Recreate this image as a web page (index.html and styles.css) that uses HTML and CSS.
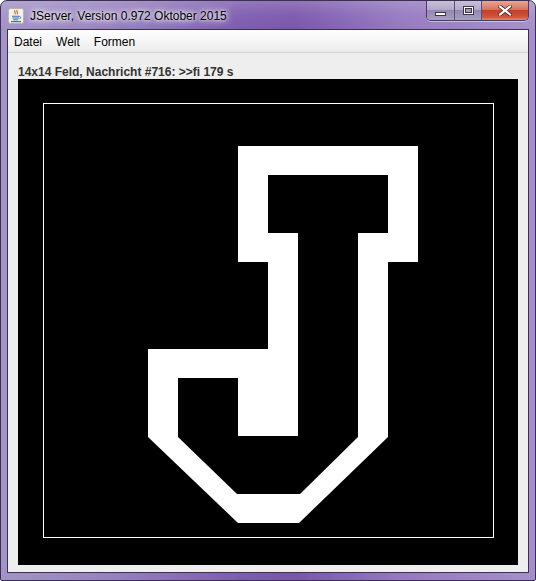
FILE: index.html
```html
<!DOCTYPE html>
<html>
<head>
<meta charset="utf-8">
<title>JServer</title>
<link rel="stylesheet" href="styles.css">
</head>
<body>
<div class="window">
  <div class="titlebar">
    <svg class="appicon" width="16" height="16" viewBox="0 0 16 16">
      <rect x="0.5" y="0.5" width="15" height="15" rx="2" fill="#f4f1ea" stroke="#b9b2a6"/>
      <path d="M7 2.5c-1.5 1.2 1.2 2.2 0 3.8M9 2c-1 1.5 1.4 2 .2 4.2" fill="none" stroke="#e0561f" stroke-width="1.1"/>
      <path d="M4 8.2h7.5M4.5 10h6.5M5.2 11.8h5" stroke="#3b6fb6" stroke-width="1.1"/>
      <path d="M11.5 8.5c1.6 0 1.6 2 0 2.2" fill="none" stroke="#3b6fb6" stroke-width="0.9"/>
      <path d="M3 13.6h10" stroke="#3b6fb6" stroke-width="1.1"/>
    </svg>
    <span class="title">JServer, Version 0.972 Oktober 2015</span>
    <div class="buttons">
      <div class="btn btn-min"><span class="glyph-min"></span></div>
      <div class="btn btn-max"><span class="glyph-max"></span></div>
      <div class="btn btn-close">
        <svg width="14" height="11" viewBox="0 0 14 11">
          <path d="M2 1.5l10 8M12 1.5l-10 8" stroke="#5a1a10" stroke-width="3.6" stroke-linecap="square"/>
          <path d="M2 1.5l10 8M12 1.5l-10 8" stroke="#ffffff" stroke-width="2.2" stroke-linecap="square"/>
        </svg>
      </div>
    </div>
  </div>
  <div class="client">
    <div class="menubar">
      <span class="menu-item">Datei</span>
      <span class="menu-item">Welt</span>
      <span class="menu-item">Formen</span>
    </div>
    <div class="status">14x14 Feld, Nachricht #716: &gt;&gt;fi 179 s</div>
    <svg class="field" width="500" height="486" viewBox="18 79 500 486">
      <rect x="18" y="79" width="500" height="486" fill="#000"/>
      <rect x="43.5" y="103.5" width="450" height="434" fill="none" stroke="#fff" stroke-width="1"/>
      <path fill="#fff" fill-rule="evenodd" d="
        M238 146 H418 V262 H388 V437 L299 523 H238 L148 437 V349 H268 V262 H238 Z
        M268 175 H388 V233 H358 V437 L300 494 H237 L178 437 V378 H238 V436 H298 V233 H268 Z"/>
    </svg>
  </div>
</div>
</body>
</html>
```

FILE: styles.css
```css
* { box-sizing: border-box; }

html, body {
  margin: 0;
  padding: 0;
  background: #ffffff;
}

.window {
  width: 536px;
  height: 581px;
  display: flex;
  flex-direction: column;
  border: 1px solid #3a3050;
  border-radius: 7px 7px 2px 2px;
  background:
    linear-gradient(180deg, rgba(255,255,255,0.18) 0px, rgba(255,255,255,0.05) 14px, rgba(0,0,0,0) 29px),
    linear-gradient(90deg, #a393c6 0%, #9782c0 20%, #7d5cae 45%, #7a56ab 55%, #9579c0 75%, #a58fcb 100%);
  overflow: hidden;
}

.titlebar {
  height: 28px;
  display: flex;
  align-items: center;
  padding-left: 7px;
}

.appicon {
  flex: none;
  margin-top: 2px;
}

.title {
  margin-left: 6px;
  margin-top: 1px;
  font-family: "Liberation Sans", Arial, sans-serif;
  font-size: 12px;
  color: #000;
  text-shadow: 0 0 6px rgba(255,255,255,0.95), 0 0 10px rgba(255,255,255,0.8), 0 0 3px rgba(255,255,255,0.9);
}

.buttons {
  margin-left: auto;
  margin-right: 6px;
  align-self: flex-start;
  display: flex;
  height: 20px;
  border: 1px solid #4a3d63;
  border-top: none;
  border-radius: 0 0 5px 5px;
  overflow: hidden;
  box-shadow: 0 1px 0 rgba(255,255,255,0.45);
}

.btn {
  height: 19px;
  display: flex;
  align-items: center;
  justify-content: center;
  border-left: 1px solid #5d5078;
}

.btn:first-child { border-left: none; }

.btn-min, .btn-max {
  width: 27px;
  background: linear-gradient(180deg, #c9c0d9 0%, #b4a9cb 45%, #9488b0 50%, #a89fc4 100%);
}

.btn-close {
  width: 47px;
  background: linear-gradient(180deg, #e9a596 0%, #d8735d 45%, #c2412a 50%, #d2553a 85%, #e48a6c 100%);
}

.glyph-min {
  display: block;
  width: 11px;
  height: 4px;
  margin-top: 6px;
  background: #ffffff;
  border: 1px solid #3b3450;
}

.glyph-max {
  display: block;
  width: 11px;
  height: 9px;
  border: 1px solid #3b3450;
  background: #ffffff;
  box-shadow: inset 0 0 0 1px #ffffff, inset 0 0 0 2px #3b3450, inset 0 0 0 6px #a59bbf;
}

.client {
  flex: 1;
  margin: 0 6px 7px 6px;
  border: 1px solid #3b3150;
  background: #eeeeee;
  display: flex;
  flex-direction: column;
  align-items: flex-start;
}

.menubar {
  align-self: stretch;
  height: 23px;
  display: flex;
  align-items: center;
  gap: 2px;
  padding-top: 1px;
  background: linear-gradient(180deg, #ffffff 0%, #f6f6f6 50%, #ebebeb 100%);
  border-bottom: 1px solid #d4d4d4;
}

.menu-item {
  padding: 0 6px;
  font-family: "Liberation Sans", Arial, sans-serif;
  font-size: 12px;
  color: #000;
}

.status {
  padding: 12px 0 0 10px;
  line-height: 14px;
  font-family: "Liberation Sans", Arial, sans-serif;
  font-weight: bold;
  font-size: 12px;
  color: #333333;
}

.field {
  display: block;
  margin-left: 10px;
}
```
